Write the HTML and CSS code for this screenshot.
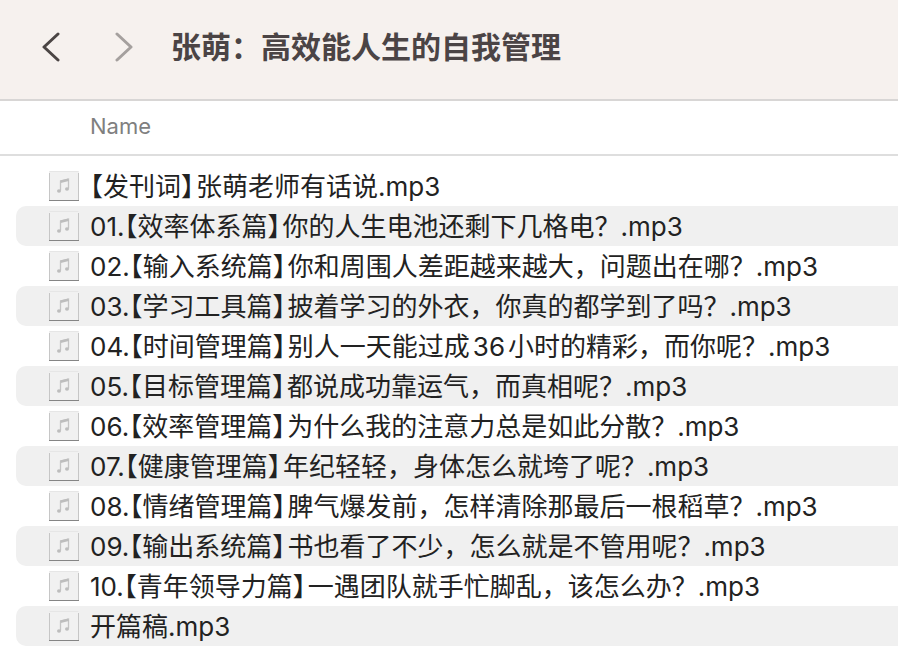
FILE: index.html
```html
<!DOCTYPE html>
<html lang="zh-CN">
<head>
    <meta charset="UTF-8">
    <meta name="viewport" content="width=device-width, initial-scale=1.0">
    <title>张萌：高效能人生的自我管理</title>
    <link rel="stylesheet" href="styles.css">
</head>
<body>
    <svg class="symbols" aria-hidden="true">
        <symbol id="music" viewBox="0 0 32 32">
            <rect x="1" y="1" width="30" height="29" fill="#f1f1f1"/>
            <path d="M1.500 3v27M30.500 3v27" stroke="#c6c6c6"/>
            <path d="M1.500 1.500h29" stroke="#e6e6e6"/>
            <path d="M1 30.500h30" stroke="#858585"/>
            <path d="M12.500 20.500v-9.500l8-2v9.500" fill="none" stroke="#c4c4c4" stroke-width="1.300"/>
            <path d="M12.500 11.700l8-2" stroke="#bdbdbd" stroke-width="2.600"/>
            <ellipse cx="11" cy="21" rx="2" ry="1.700" fill="#bdbdbd"/>
            <ellipse cx="19" cy="19" rx="2" ry="1.700" fill="#bdbdbd"/>
        </symbol>
    </svg>

    <!-- 工具栏 -->
    <header class="toolbar">
        <button class="nav-button" aria-label="后退">
            <svg width="20" height="30" viewBox="0 0 20 30"><path d="M18 2L4 15l14 13"/></svg>
        </button>
        <button class="nav-button forward" aria-label="前进">
            <svg width="20" height="30" viewBox="0 0 20 30"><path d="M3 2l14 13L3 28"/></svg>
        </button>
        <h1 class="title">张萌：高效能人生的自我管理</h1>
    </header>

    <!-- 文件列表 -->
    <table class="files">
        <thead>
            <tr><th scope="col">Name</th></tr>
        </thead>
        <tbody>
            <tr><td><div class="file"><svg class="icon"><use href="#music"/></svg><span class="name"><span class="tag">【发刊词】</span>张萌老师有话说.mp3</span></div></td></tr>
            <tr><td><div class="file"><svg class="icon"><use href="#music"/></svg><span class="name">01.<span class="tag">【效率体系篇】</span>你的人生电池还剩下几格电？.mp3</span></div></td></tr>
            <tr><td><div class="file"><svg class="icon"><use href="#music"/></svg><span class="name">02.<span class="tag">【输入系统篇】</span>你和周围人差距越来越大，问题出在哪？.mp3</span></div></td></tr>
            <tr><td><div class="file"><svg class="icon"><use href="#music"/></svg><span class="name">03.<span class="tag">【学习工具篇】</span>披着学习的外衣，你真的都学到了吗？.mp3</span></div></td></tr>
            <tr><td><div class="file"><svg class="icon"><use href="#music"/></svg><span class="name">04.<span class="tag">【时间管理篇】</span>别人一天能过成<span class="number">36</span>小时的精彩，而你呢？.mp3</span></div></td></tr>
            <tr><td><div class="file"><svg class="icon"><use href="#music"/></svg><span class="name">05.<span class="tag">【目标管理篇】</span>都说成功靠运气，而真相呢？.mp3</span></div></td></tr>
            <tr><td><div class="file"><svg class="icon"><use href="#music"/></svg><span class="name">06.<span class="tag">【效率管理篇】</span>为什么我的注意力总是如此分散？.mp3</span></div></td></tr>
            <tr><td><div class="file"><svg class="icon"><use href="#music"/></svg><span class="name">07.<span class="tag">【健康管理篇】</span>年纪轻轻，身体怎么就垮了呢？.mp3</span></div></td></tr>
            <tr><td><div class="file"><svg class="icon"><use href="#music"/></svg><span class="name">08.<span class="tag">【情绪管理篇】</span>脾气爆发前，怎样清除那最后一根稻草？.mp3</span></div></td></tr>
            <tr><td><div class="file"><svg class="icon"><use href="#music"/></svg><span class="name">09.<span class="tag">【输出系统篇】</span>书也看了不少，怎么就是不管用呢？.mp3</span></div></td></tr>
            <tr><td><div class="file"><svg class="icon"><use href="#music"/></svg><span class="name">10.<span class="tag">【青年领导力篇】</span>一遇团队就手忙脚乱，该怎么办？.mp3</span></div></td></tr>
            <tr><td><div class="file"><svg class="icon"><use href="#music"/></svg><span class="name">开篇稿.mp3</span></div></td></tr>
        </tbody>
    </table>
</body>
</html>
```
FILE: styles.css
```css
* {
    margin: 0;
    padding: 0;
    box-sizing: border-box;
}

body {
    font-family: Inter, "Noto Sans CJK SC", sans-serif;
    background-color: #fff;
    color: #222;
    overflow-x: hidden;
}

.symbols {
    display: none;
}

/* 工具栏 */
.toolbar {
    display: flex;
    align-items: center;
    height: 101px;
    padding: 0 40px 6px;
    background-color: #f6f1ee;
    border-bottom: 2px solid #d8d6d5;
}

.nav-button {
    display: flex;
    margin-right: 54px;
    background: none;
    border: none;
    color: #4b4544;
    cursor: pointer;
}

.nav-button.forward {
    margin-right: 37px;
    color: #a5a09e;
}

.nav-button path {
    fill: none;
    stroke: currentColor;
    stroke-width: 3;
    stroke-linecap: round;
    stroke-linejoin: round;
}

.title {
    font-size: 30px;
    line-height: 40px;
    font-weight: bold;
    color: #4b4445;
    white-space: nowrap;
}

/* 文件列表 */
.files {
    width: 100%;
    border-collapse: collapse;
}

.files th {
    height: 54px;
    padding: 0 0 4px 90px;
    border-bottom: 2px solid #dedede;
    font-size: 22px;
    font-weight: normal;
    text-align: left;
    color: #7f7f7f;
}

.files tbody::before {
    content: '';
    display: block;
    height: 10px;
}

.files td {
    padding-left: 16px;
}

.file {
    display: flex;
    align-items: center;
    gap: 10px;
    height: 40px;
    padding-left: 32px;
    border-radius: 10px 0 0 10px;
    font-size: 26px;
    line-height: 36px;
    white-space: nowrap;
}

.name {
    padding-top: 2px;
}

/* 半宽括号 */
.tag {
    margin-right: 2px;
    font-feature-settings: "halt";
    text-spacing-trim: space-all;
}

.number {
    margin: 0 3px;
}

.files tbody tr:nth-child(even) .file {
    background-color: #f0f0f0;
}

.icon {
    flex: none;
    width: 32px;
    height: 32px;
}
```
